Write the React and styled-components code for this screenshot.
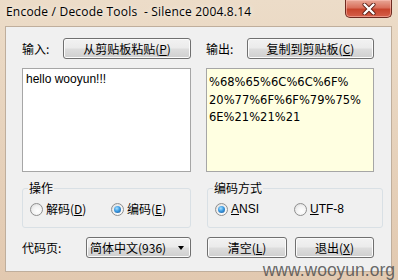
import React from "react";
import styled, { createGlobalStyle } from "styled-components";

const GlobalStyle = createGlobalStyle`
  html, body { margin: 0; padding: 0; background: #fff; }
  body {
    font-family: "Noto Sans CJK SC", "Liberation Sans", sans-serif;
    font-size: 12px;
    color: #000;
  }
`;

const Frame = styled.div`
  position: relative;
  width: 398px;
  height: 280px;
  box-sizing: border-box;
  display: flex;
  flex-direction: column;
  padding: 0 6px 8px 5px;
  background: linear-gradient(180deg, #ecdcc8 0%, #e7d3bd 45%, #e2c9b0 100%);
  overflow: hidden;
`;

const TitleBar = styled.div`
  height: 26px;
  display: flex;
  align-items: flex-start;
  justify-content: space-between;
`;

const Title = styled.div`
  padding: 5px 0 0 1px;
  font-family: "Open Sans", "Noto Sans", sans-serif;
  font-size: 12px;
  letter-spacing: 0.2px;
  line-height: 14px;
  white-space: pre;
  text-shadow: 0 0 5px rgba(255, 255, 255, 0.9);
`;

const CloseButton = styled.div`
  width: 47px;
  height: 18px;
  box-sizing: border-box;
  display: flex;
  align-items: center;
  justify-content: center;
  border: 1px solid #6e2a20;
  border-top: none;
  border-radius: 0 0 5px 5px;
  background: linear-gradient(180deg, #e8a796 0%, #d9705c 45%, #c7442c 55%, #d5604a 100%);
  box-shadow: inset 0 0 0 1px rgba(255, 200, 190, 0.5);
`;

const Client = styled.div`
  flex: 1;
  background: #f0f0f0;
  border: 1px solid #bfae9c;
  display: grid;
  grid-template-columns: 169px 168px;
  grid-template-rows: 21px 104px 47px 21px;
  column-gap: 15px;
  row-gap: 9px;
  padding: 11px 0 0 16px;
`;

const Row = styled.div`
  display: flex;
  align-items: center;
  justify-content: space-between;
  gap: ${(p) => p.gap || 0}px;
  margin-left: ${(p) => p.shift || 0}px;
`;

const Label = styled.span`
  line-height: 14px;
  white-space: nowrap;
`;

const Button = styled.div`
  width: ${(p) => p.w}px;
  height: 21px;
  box-sizing: border-box;
  display: flex;
  align-items: center;
  justify-content: center;
  border: 1px solid #707070;
  border-radius: 3px;
  background: linear-gradient(180deg, #f2f2f2 0%, #ebebeb 48%, #dddddd 52%, #cfcfcf 100%);
  box-shadow: inset 0 0 0 1px #fbfbfb;
  line-height: 14px;
  white-space: nowrap;
`;

const Key = styled.span`
  text-decoration: underline;
  text-underline-offset: 1px;
`;

const TextBox = styled.div`
  box-sizing: border-box;
  height: 104px;
  border: 1px solid #a6a6a6;
  background: ${(p) => (p.output ? "#ffffe1" : "#ffffff")};
  padding: ${(p) => (p.output ? "5px 2px" : "3px 3px")};
  font-family: ${(p) =>
    p.output ? '"DejaVu Sans", sans-serif' : '"Liberation Sans", sans-serif'};
  font-size: ${(p) => (p.output ? "11.5px" : "12px")};
  line-height: ${(p) => (p.output ? "17.6px" : "14px")};
  white-space: pre;
  color: #000;
`;

const Group = styled.fieldset`
  margin: 0 0 0 ${(p) => p.shift || 0}px;
  width: ${(p) => p.w}px;
  box-sizing: border-box;
  border: 1px solid #d9e0e5;
  border-radius: 3px;
  padding: 0 0 0 7px;
  min-width: 0;
  height: 47px;
`;

const Legend = styled.legend`
  padding: 0 1px;
  margin-left: -2px;
  line-height: 14px;
`;

const RadioRow = styled.div`
  display: flex;
  align-items: center;
  height: 14px;
  padding-top: 7px;
`;

const RadioItem = styled.label`
  display: flex;
  align-items: center;
  gap: 3px;
  width: ${(p) => p.w}px;
  line-height: 14px;
  white-space: nowrap;
  font-family: ${(p) =>
    p.latin ? '"Liberation Sans", sans-serif' : "inherit"};
`;

const RadioDot = styled.span`
  width: 13px;
  height: 13px;
  box-sizing: border-box;
  border-radius: 50%;
  border: 1px solid #8f8f8f;
  display: flex;
  align-items: center;
  justify-content: center;
  background: radial-gradient(circle at 60% 65%, #ffffff 0%, #f2f2f2 50%, #d4d4d4 100%);
  flex: none;

  &::after {
    content: "";
    display: ${(p) => (p.checked ? "block" : "none")};
    width: 7px;
    height: 7px;
    border-radius: 50%;
    background: radial-gradient(circle at 40% 35%, #a8e0ff 0%, #3c9be2 45%, #1a4f8f 100%);
  }
`;

const Select = styled.div`
  width: 105px;
  height: 21px;
  box-sizing: border-box;
  display: flex;
  align-items: center;
  justify-content: space-between;
  padding: 0 6px 0 3px;
  border: 1px solid #707070;
  border-radius: 3px;
  background: linear-gradient(180deg, #f2f2f2 0%, #ebebeb 48%, #dddddd 52%, #cfcfcf 100%);
  box-shadow: inset 0 0 0 1px #fbfbfb;
  line-height: 14px;
  white-space: nowrap;
`;

const Arrow = styled.span`
  width: 0;
  height: 0;
  border-left: 3.5px solid transparent;
  border-right: 3.5px solid transparent;
  border-top: 4px solid #000;
`;

const Watermark = styled.div`
  position: absolute;
  right: 3px;
  bottom: 0;
  font-family: "Liberation Sans", sans-serif;
  font-size: 17.5px;
  line-height: 20px;
  color: rgba(80, 80, 80, 0.85);
`;

export default function App() {
  return (
    <Frame>
      <GlobalStyle />
      <TitleBar>
        <Title>Encode / Decode Tools  - Silence 2004.8.14</Title>
        <CloseButton>
          <svg width="14" height="12" viewBox="0 0 14 12">
            <path
              d="M2.5 1.5 L11.5 10.5 M11.5 1.5 L2.5 10.5"
              stroke="#5a1d14"
              strokeWidth="4"
              strokeLinecap="round"
            />
            <path
              d="M2.5 1.5 L11.5 10.5 M11.5 1.5 L2.5 10.5"
              stroke="#ffffff"
              strokeWidth="2.4"
              strokeLinecap="round"
            />
          </svg>
        </CloseButton>
      </TitleBar>
      <Client>
        <Row>
          <Label>输入:</Label>
          <Button w={128}>
            从剪贴板粘贴(<Key>P</Key>)
          </Button>
        </Row>
        <Row>
          <Label>输出:</Label>
          <Button w={127}>
            复制到剪贴板(<Key>C</Key>)
          </Button>
        </Row>
        <TextBox>hello wooyun!!!</TextBox>
        <TextBox output>
          {"%68%65%6C%6C%6F%\n20%77%6F%6F%79%75%\n6E%21%21%21"}
        </TextBox>
        <Group w={169}>
          <Legend>操作</Legend>
          <RadioRow>
            <RadioItem w={81}>
              <RadioDot />
              <span>
                解码(<Key>D</Key>)
              </span>
            </RadioItem>
            <RadioItem>
              <RadioDot checked />
              <span>
                编码(<Key>E</Key>)
              </span>
            </RadioItem>
          </RadioRow>
        </Group>
        <Group w={176} shift={1}>
          <Legend>编码方式</Legend>
          <RadioRow>
            <RadioItem w={79} latin>
              <RadioDot checked />
              <span>
                <Key>A</Key>NSI
              </span>
            </RadioItem>
            <RadioItem latin>
              <RadioDot />
              <span>
                <Key>U</Key>TF-8
              </span>
            </RadioItem>
          </RadioRow>
        </Group>
        <Row>
          <Label>代码页:</Label>
          <Select>
            <span>简体中文(936)</span>
            <Arrow />
          </Select>
        </Row>
        <Row shift={1} gap={7}>
          <Button w={80}>
            清空(<Key>L</Key>)
          </Button>
          <Button w={79}>
            退出(<Key>X</Key>)
          </Button>
        </Row>
      </Client>
      <Watermark>www.wooyun.org</Watermark>
    </Frame>
  );
}
